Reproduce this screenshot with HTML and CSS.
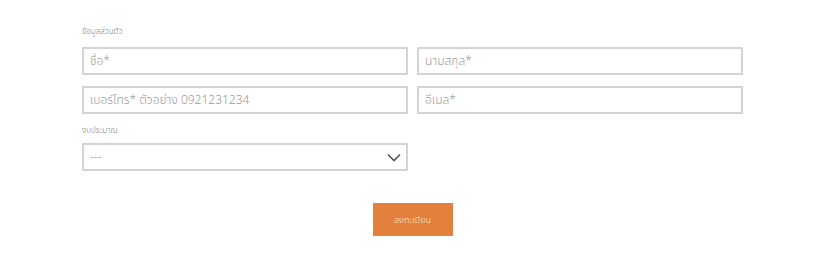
FILE: index.html
```html
<!DOCTYPE html>
<html lang="th">
<head>
<meta charset="utf-8">
<link rel="stylesheet" href="styles.css">
</head>
<body>
<form class="form">
  <div class="section-label">ข้อมูลส่วนตัว</div>
  <div class="grid">
    <input class="field" type="text" placeholder="ชื่อ*">
    <input class="field" type="text" placeholder="นามสกุล*">
    <input class="field" type="text" placeholder="เบอร์โทร* ตัวอย่าง 0921231234">
    <input class="field" type="text" placeholder="อีเมล*">
  </div>
  <div class="section-label budget">งบประมาณ</div>
  <div class="select-wrap">
    <div class="select">
      <span>---</span>
      <svg class="chev" width="14" height="9" viewBox="0 0 14 9"><path d="M1 1.5 L7 7.5 L13 1.5" fill="none" stroke="#555" stroke-width="1.6"/></svg>
    </div>
  </div>
  <div class="actions">
    <button class="btn" type="button">ลงทะเบียน</button>
  </div>
</form>
</body>
</html>
```
FILE: styles.css
```css
* { box-sizing: border-box; }
body {
  margin: 0;
  background: #fff;
  font-family: "Noto Sans Thai", "Noto Sans", "Liberation Sans", sans-serif;
  font-weight: 300;
  color: #666;
}
.form {
  width: 661px;
  margin-left: 82px;
  padding-top: 26px;
}
.section-label {
  font-size: 8px;
  color: #808080;
  height: 12px;
  line-height: 12px;
  margin-bottom: 9px;
}
.grid {
  display: grid;
  grid-template-columns: 326px 326px;
  column-gap: 9px;
  row-gap: 11px;
}
.field {
  height: 28px;
  border: 2px solid #d4d4d4;
  padding: 0 6px;
  font-family: inherit;
  font-weight: 300;
  font-size: 12px;
  color: #555;
  background: #fff;
  outline: none;
}
.field::placeholder { color: #999; }
.budget { margin-top: 11px; margin-bottom: 6px; }
.select-wrap { width: 326px; }
.select {
  height: 28px;
  border: 2px solid #d4d4d4;
  display: flex;
  align-items: center;
  justify-content: space-between;
  padding: 0 5px 0 6px;
  font-size: 12px;
  color: #999;
}
.chev { display: block; }
.actions {
  display: flex;
  justify-content: center;
  margin-top: 32px;
}
.btn {
  width: 80px;
  height: 33px;
  background: #e3803b;
  border: none;
  color: #fbe3d2;
  font-family: inherit;
  font-weight: 300;
  font-size: 9px;
}
```
